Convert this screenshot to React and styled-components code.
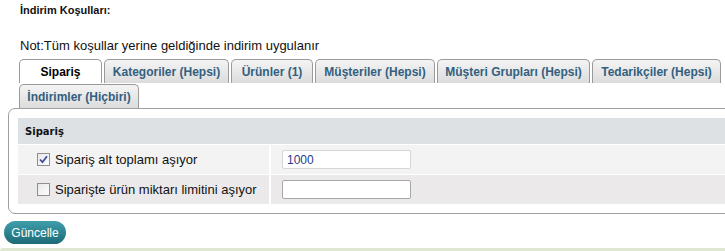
import React from 'react';
import styled, { createGlobalStyle } from 'styled-components';

const GlobalStyle = createGlobalStyle`
  html, body {
    margin: 0;
    padding: 0;
    background: #fff;
    overflow: hidden;
  }
  body {
    font-family: "Liberation Sans", Arial, sans-serif;
    color: #000;
  }
`;

const tabs = [
  { label: 'Sipariş', width: 83, active: true },
  { label: 'Kategoriler (Hepsi)', width: 125 },
  { label: 'Ürünler (1)', width: 82 },
  { label: 'Müşteriler (Hepsi)', width: 120 },
  { label: 'Müşteri Grupları (Hepsi)', width: 153 },
  { label: 'Tedarikçiler (Hepsi)', width: 129 },
  { label: 'İndirimler (Hiçbiri)', width: 120 },
];

const App = () => (
  <Page>
    <GlobalStyle />
    <Title>İndirim Koşulları:</Title>
    <Note>Not:Tüm koşullar yerine geldiğinde indirim uygulanır</Note>
    <TabBar>
      {tabs.map((t) => (
        <Tab key={t.label} $active={t.active} $width={t.width}>
          {t.label}
        </Tab>
      ))}
    </TabBar>
    <Panel>
      <Table>
        <HeadRow>Sipariş</HeadRow>
        <Row $alt={false}>
          <LabelCell>
            <Check $checked />
            Sipariş alt toplamı aşıyor
          </LabelCell>
          <ValueCell>
            <Field defaultValue="1000" $light />
          </ValueCell>
        </Row>
        <Row $alt>
          <LabelCell>
            <Check />
            Siparişte ürün miktarı limitini aşıyor
          </LabelCell>
          <ValueCell>
            <Field defaultValue="" />
          </ValueCell>
        </Row>
      </Table>
    </Panel>
    <Button>Güncelle</Button>
    <Footer />
  </Page>
);

const Check = ({ $checked }) => (
  <CheckBox>
    {$checked && (
      <svg width="9" height="9" viewBox="0 0 9 9">
        <path d="M1 4.5 L3.5 7.2 L8 1.2" fill="none" stroke="#3c4ea0" strokeWidth="1.8" />
      </svg>
    )}
  </CheckBox>
);

const Page = styled.div`
  width: 725px;
  height: 251px;
  display: flex;
  flex-direction: column;
  position: relative;
`;

const Title = styled.div`
  margin: 4px 0 0 20px;
  font-size: 11px;
  font-weight: 700;
  line-height: 13px;
  color: #111;
`;

const Note = styled.div`
  margin: 21px 0 0 20px;
  font-size: 13px;
  line-height: 15px;
  color: #111;
`;

const TabBar = styled.div`
  margin: 6px 0 0 19px;
  width: 706px;
  display: flex;
  flex-wrap: wrap;
  column-gap: 2px;
  row-gap: 1px;
`;

const Tab = styled.div`
  width: ${(p) => p.$width}px;
  height: 24px;
  box-sizing: border-box;
  display: flex;
  align-items: center;
  justify-content: center;
  border: 1px solid #9a9a9a;
  border-bottom: none;
  border-radius: 5px 5px 0 0;
  font-size: 12px;
  font-weight: 700;
  white-space: nowrap;
  color: ${(p) => (p.$active ? '#000' : '#33607f')};
  background: ${(p) =>
    p.$active ? '#fff' : 'linear-gradient(#f4f4f4, #dcdcdc)'};
`;

const Panel = styled.div`
  margin-left: 8px;
  width: 740px;
  box-sizing: border-box;
  border: 1px solid #a0a0a0;
  border-radius: 7px;
  padding: 9px;
`;

const Table = styled.div`
  display: flex;
  flex-direction: column;
  gap: 1px;
  background: #fff;
`;

const HeadRow = styled.div`
  height: 26px;
  display: flex;
  align-items: center;
  padding-left: 7px;
  background: #dde1e3;
  font-family: "DejaVu Sans", Tahoma, sans-serif;
  font-size: 10px;
  font-weight: 700;
  color: #111;
`;

const Row = styled.div`
  height: 29px;
  display: grid;
  grid-template-columns: 251px 1fr;
  column-gap: 2px;
  background: #fff;
  & > div {
    background: ${(p) => (p.$alt ? '#ebe9e9' : '#f3f3f3')};
  }
`;

const LabelCell = styled.div`
  display: flex;
  align-items: center;
  padding-left: 19px;
  font-size: 13px;
  color: #111;
`;

const CheckBox = styled.span`
  width: 11px;
  height: 11px;
  margin-right: 5px;
  border: 1px solid #8f8f8f;
  background: linear-gradient(135deg, #e8e8e8, #fdfdfd);
  display: inline-flex;
  align-items: center;
  justify-content: center;
`;

const ValueCell = styled.div`
  display: flex;
  align-items: center;
  padding-left: 11px;
`;

const Field = styled.input`
  width: 129px;
  height: 19px;
  box-sizing: border-box;
  border: 1px solid ${(p) => (p.$light ? '#d3d6da' : '#a8a8a8')};
  border-radius: 2px;
  background: #fff;
  padding: 0 4px;
  font-family: "Liberation Sans", Arial, sans-serif;
  font-size: 12px;
  color: #2a3a8a;
  outline: none;
`;

const Button = styled.div`
  margin: 7px 0 0 4px;
  width: 62px;
  height: 23px;
  border-radius: 12px;
  display: flex;
  align-items: center;
  justify-content: center;
  background: linear-gradient(#3f9eab, #1c6a76);
  color: #fff;
  font-size: 12px;
`;

const Footer = styled.div`
  position: absolute;
  left: 0;
  right: 0;
  bottom: 0;
  height: 3px;
  background: #dfe6d2;
  border-top-left-radius: 4px;
`;

export default App;
